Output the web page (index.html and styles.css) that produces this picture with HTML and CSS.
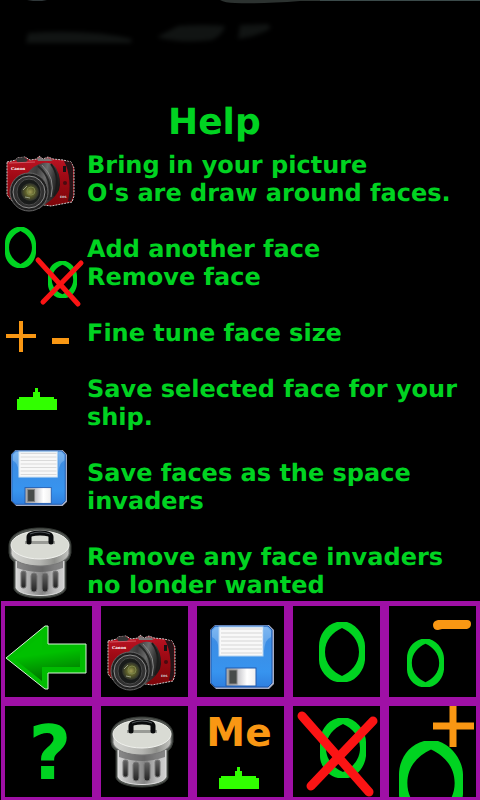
FILE: index.html
```html
<!DOCTYPE html>
<html lang="en">
<head>
    <meta charset="UTF-8">
    <meta name="viewport" content="width=device-width, initial-scale=1.0">
    <title>Help</title>
    <link rel="stylesheet" href="styles.css">
</head>
<body>

<!-- shared icons -->
<svg class="defs" aria-hidden="true">
    <defs>
        <linearGradient id="redBody" x1="0" y1="0" x2="0" y2="1">
            <stop offset="0" stop-color="#c01525"/>
            <stop offset="0.4" stop-color="#a00a15"/>
            <stop offset="1" stop-color="#7c0509"/>
        </linearGradient>
        <linearGradient id="barrel" x1="0" y1="0.3" x2="1" y2="0.6">
            <stop offset="0" stop-color="#555"/>
            <stop offset="0.3" stop-color="#3c3c3c"/>
            <stop offset="0.55" stop-color="#6c6c6c"/>
            <stop offset="0.75" stop-color="#3a3a3a"/>
            <stop offset="1" stop-color="#111"/>
        </linearGradient>
        <radialGradient id="glass">
            <stop offset="0" stop-color="#a09d55"/>
            <stop offset="0.5" stop-color="#5c5e2a"/>
            <stop offset="1" stop-color="#2b2e2a"/>
        </radialGradient>
        <linearGradient id="blue" x1="0" y1="0" x2="0" y2="1">
            <stop offset="0" stop-color="#65a9ee"/>
            <stop offset="0.25" stop-color="#3c8de4"/>
            <stop offset="0.75" stop-color="#3794ef"/>
            <stop offset="1" stop-color="#2f7fdf"/>
        </linearGradient>
        <linearGradient id="shutter">
            <stop offset="0" stop-color="#a5a5a5"/>
            <stop offset="0.4" stop-color="#c8c8cc"/>
            <stop offset="0.7" stop-color="#fff"/>
            <stop offset="1" stop-color="#eee"/>
        </linearGradient>
        <linearGradient id="can">
            <stop offset="0" stop-color="#d8d8d8"/>
            <stop offset="0.3" stop-color="#aaa"/>
            <stop offset="0.55" stop-color="#858585"/>
            <stop offset="0.8" stop-color="#bbb"/>
            <stop offset="1" stop-color="#d0d0d0"/>
        </linearGradient>
        <linearGradient id="rim">
            <stop offset="0" stop-color="#d5d6d2"/>
            <stop offset="0.5" stop-color="#b5b6b2"/>
            <stop offset="0.75" stop-color="#8f908c"/>
            <stop offset="1" stop-color="#c5c6c2"/>
        </linearGradient>
        <linearGradient id="slot" x1="0" y1="0" x2="0" y2="1">
            <stop offset="0" stop-color="#666"/>
            <stop offset="1" stop-color="#222"/>
        </linearGradient>
        <linearGradient id="arrow" x1="0.4" y1="0" x2="0.6" y2="1">
            <stop offset="0" stop-color="#00c000"/>
            <stop offset="0.4" stop-color="#00c000"/>
            <stop offset="0.7" stop-color="#009800"/>
            <stop offset="1" stop-color="#006c00"/>
        </linearGradient>
    </defs>

    <symbol id="camera" viewBox="0 0 70 58">
        <path d="M2 7 L11 5 L12 3 L20 2 L25 5 L32 4 L34 1 L38 4 L43 2 L48 4 L58 5 L66 7 L69 13 L69 41 L67 47 L46 51 L6 45 L2 40Z" fill="url(#redBody)" stroke="#ccc" stroke-width="1" stroke-dasharray="2 1"/>
        <path d="M59 6 L66 7 L68 13 L68 41 L66 46 L63 46 C66 35 65 16 59 6Z" fill="#251417"/>
        <path d="M11 5 L12 3 L19 2 L23 5 L20 8 L13 8Z" fill="#343434"/>
        <path d="M32 4 L35 2 L38 4 L43 3 L48 5 L46 6 L33 6Z" fill="#777"/>
        <path d="M4 8 L30 7" stroke="#d45563" stroke-width="1"/>
        <path d="M22 19 Q28 10 38 8 Q47 7 51 13 Q57 24 54 35 Q50 43 42 48 L34 54 L18 40Z" fill="url(#barrel)"/>
        <path d="M46 9 Q56 22 49 41" fill="none" stroke="#1b1b1b" stroke-width="2"/>
        <path d="M33 11 Q49 24 43 45" fill="none" stroke="#272727" stroke-width="2"/>
        <path d="M37 10 Q51 23 46 42" fill="none" stroke="#888" stroke-width="1"/>
        <ellipse cx="24" cy="37" rx="19" ry="19" fill="#202020" stroke="#666" stroke-width="1"/>
        <ellipse cx="24" cy="37" rx="16" ry="16" fill="#303030" stroke="#8c8c8c" stroke-width="1"/>
        <ellipse cx="24" cy="37" rx="12" ry="13" fill="#191b1a" stroke="#4a4a4a" stroke-width="1"/>
        <circle cx="25" cy="37" r="9" fill="url(#glass)"/>
        <circle cx="26" cy="36" r="4" fill="none" stroke="#7c854a" stroke-width="1"/>
        <path d="M18 35 L22 31 M20 42 L25 43" stroke="#989e85" stroke-width="1"/>
        <rect x="58" y="11" width="3" height="6" fill="#181014"/>
        <circle cx="60" cy="28" r="2" fill="#4a0b10"/>
        <text x="6" y="15" class="brand">Canon</text>
        <text x="55" y="43" class="model">EOS</text>
    </symbol>

    <symbol id="disk" viewBox="0 0 64 64">
        <path d="M5 0 H59 L64 5 V59 L59 64 H6 L0 58 V5Z" fill="#a5adc4"/>
        <path d="M5 1 H58 L62 5 V58 L58 62 H5 L1 58 V5Z" fill="url(#blue)" stroke="#1d57ac" stroke-width="1"/>
        <path d="M2 6 L6 2 H9 V26 Q8 14 2 12Z M61 6 L57 2 H54 V26 Q55 14 61 12Z" fill="#a7cff8" opacity="0.4"/>
        <rect x="9" y="2" width="44" height="29" fill="#f8f8f8" stroke="#b5d4f0" stroke-width="1"/>
        <path d="M11 4 H52 M11 8 H52 M11 12 H52 M11 16 H52 M11 20 H52 M11 24 H52 M11 28 H52" stroke="#d6d6d6" stroke-width="1"/>
        <rect x="16" y="43" width="30" height="18" fill="url(#shutter)" stroke="#205aae" stroke-width="1"/>
        <rect x="19" y="45" width="8" height="14" fill="#474b49" stroke="#888" stroke-width="1"/>
    </symbol>

    <symbol id="trash" viewBox="0 0 64 72">
        <path d="M1 19 C1 7 15 1 32 1 C49 1 63 7 63 19 V26 Q62 32 58 35 V62 C54 74 10 74 6 62 V35 Q1 31 1 26Z" fill="#505450" stroke="#333733" stroke-width="1"/>
        <path d="M8 34 H56 V61 C52 71 12 71 8 61Z" fill="url(#can)" stroke="#e0e0e0" stroke-width="1"/>
        <path d="M9 34 H55 V41 Q32 49 9 41Z" fill="#555" opacity="0.6"/>
        <path d="M3 19 H61 V27 C57 43 7 43 3 27Z" fill="url(#rim)" stroke="#777" stroke-width="1"/>
        <ellipse cx="32" cy="18" rx="29" ry="14" fill="#d9dbd4" stroke="#f0f1ed" stroke-width="1"/>
        <path d="M17 17 V14 H47 V17Z" fill="#999b96"/>
        <path d="M21 15 V10 Q21 6 32 6 Q43 6 43 10 V15" fill="none" stroke="#080a0b" stroke-width="5" stroke-linecap="round"/>
        <path d="M22 7 Q32 3 42 7" fill="none" stroke="#52575a" stroke-width="1"/>
        <g fill="url(#slot)" stroke="#777" stroke-width="1">
            <rect x="13" y="44" width="5" height="17" rx="2"/>
            <rect x="23" y="46" width="6" height="19" rx="3"/>
            <rect x="34" y="46" width="6" height="19" rx="3"/>
            <rect x="45" y="44" width="5" height="17" rx="2"/>
        </g>
    </symbol>

    <symbol id="ship" viewBox="0 0 40 22">
        <path d="M0 22 V11 H2 V9 H16 V4 H18 V0 H21 V4 H23 V9 H37 V11 H40 V22Z" fill="#31ff00"/>
    </symbol>

    <symbol id="ring" viewBox="0 0 46 60" preserveAspectRatio="none">
        <path d="M18 0 H28 C40 4 46 16 46 24 V38 C45 48 38 58 28 60 H18 C8 58 0 48 0 38 V24 C0 14 6 3 18 0Z M23 6 C14 10 6 18 6 30 C6 42 14 50 23 54 C32 50 40 42 40 30 C40 18 32 10 23 6Z" fill="#00d321" fill-rule="evenodd"/>
    </symbol>
</svg>

<header>
    <svg class="backdrop" viewBox="0 0 480 102" aria-hidden="true">
        <path d="M27 0 H47 L42 1 H33Z" fill="#30383a"/>
        <path d="M220 0 H320 V1 H300 Q260 4 235 3 Q225 3 220 0Z" fill="#2c3230"/>
        <path d="M320 0 H480 V1 H320Z" fill="#3b4a4a"/>
        <g class="smudge">
            <path d="M26 43 L28 33 Q90 29 132 39 L131 43Z"/>
            <path d="M157 37 L178 26 Q205 24 225 26 Q223 35 212 40 Q180 44 157 37Z"/>
            <path d="M238 39 L240 25 L268 24 L271 28 Q259 36 238 39Z"/>
        </g>
    </svg>
    <h1>Help</h1>
</header>

<main>
    <ul class="help-list">
        <li>
            <svg class="help-icon" viewBox="0 0 87 56" aria-hidden="true">
                <use href="#camera" x="5" y="4" width="70" height="58"/>
            </svg>
            <p>Bring in your picture<br>O's are draw around faces.</p>
        </li>
        <li>
            <svg class="help-icon" viewBox="0 0 87 56" aria-hidden="true">
                <use href="#ring" x="5" y="-8" width="31" height="41"/>
                <use href="#ring" x="48" y="26" width="29" height="37"/>
                <path class="cross" d="M38 25 L78 69 M81 28 L43 67" stroke-width="5"/>
            </svg>
            <p>Add another face<br>Remove face</p>
        </li>
        <li>
            <svg class="help-icon" viewBox="0 0 87 56" aria-hidden="true">
                <path class="sign" d="M6 17 H36 M21 2 V33" stroke-width="4"/>
                <path class="sign" d="M52 22 H69" stroke-width="6"/>
            </svg>
            <p>Fine tune face size</p>
        </li>
        <li>
            <svg class="help-icon" viewBox="0 0 87 56" aria-hidden="true">
                <use href="#ship" x="17" y="13" width="40" height="22"/>
            </svg>
            <p>Save selected face for your ship.</p>
        </li>
        <li>
            <svg class="help-icon" viewBox="0 0 87 56" aria-hidden="true">
                <use href="#disk" x="11" y="-9" width="56" height="56"/>
            </svg>
            <p>Save faces as the space invaders</p>
        </li>
        <li>
            <svg class="help-icon" viewBox="0 0 87 56" aria-hidden="true">
                <use href="#trash" x="8" y="-16" width="64" height="72"/>
            </svg>
            <p>Remove any face invaders no londer wanted</p>
        </li>
    </ul>
</main>

<nav class="toolbar">
    <button type="button" aria-label="Back">
        <svg viewBox="0 0 87 91">
            <path d="M1 52 L40 20 H43 V38 H81 V67 H43 V83 H40Z" fill="#00bd00" stroke="#d5f5d5" stroke-width="1"/>
            <path d="M8 52 L37 29 V44 H75 V61 H37 V75Z" fill="url(#arrow)"/>
        </svg>
    </button>
    <button type="button" aria-label="Picture">
        <svg viewBox="0 0 87 91"><use href="#camera" x="5" y="28" width="70" height="58"/></svg>
    </button>
    <button type="button" aria-label="Save">
        <svg viewBox="0 0 87 91"><use href="#disk" x="13" y="19" width="64" height="64"/></svg>
    </button>
    <button type="button" aria-label="Add face">
        <svg viewBox="0 0 87 91"><use href="#ring" x="26" y="16" width="46" height="60"/></svg>
    </button>
    <button type="button" aria-label="Smaller">
        <svg viewBox="0 0 87 91">
            <use href="#ring" x="18" y="33" width="37" height="48"/>
            <path d="M49 14 Q44 15 44 19 Q44 24 49 24 L53 23 H78 Q82 22 82 18 Q82 14 78 14Z" fill="#f99713"/>
        </svg>
    </button>
    <button type="button" class="question" aria-label="Help">?</button>
    <button type="button" aria-label="Delete">
        <svg viewBox="0 0 87 91"><use href="#trash" x="9" y="10" width="64" height="72"/></svg>
    </button>
    <button type="button" class="me">
        <span>Me</span>
        <svg class="me-ship" viewBox="0 0 40 22" aria-hidden="true"><use href="#ship" width="40" height="22"/></svg>
    </button>
    <button type="button" aria-label="Remove face">
        <svg viewBox="0 0 87 91">
            <use href="#ring" x="27" y="12" width="46" height="60"/>
            <path class="cross" d="M9 10 L76 86 M80 15 L18 80" stroke-width="9"/>
        </svg>
    </button>
    <button type="button" aria-label="Bigger">
        <svg viewBox="0 0 87 91">
            <path class="sign" d="M44 20 H85 M64 0 V41" stroke-width="7"/>
            <use href="#ring" x="10" y="35" width="64" height="84"/>
        </svg>
    </button>
</nav>

</body>
</html>
```

FILE: styles.css
```css
* {
    box-sizing: border-box;
}
body {
    font-family: "DejaVu Sans", sans-serif;
    font-weight: bold;
    text-rendering: geometricPrecision;
    margin: 0;
    min-height: 100vh;
    display: flex;
    flex-direction: column;
    background-color: #000;
    color: #00d321;
}
.defs {
    position: absolute;
    width: 0;
    height: 0;
    overflow: visible;
}
.backdrop {
    display: block;
    width: 100%;
}
.smudge {
    fill: #111413;
    filter: blur(2px);
}
h1 {
    margin: 0 0 7px;
    padding-left: 35%;
    font-size: 36px;
    line-height: 42px;
}
.help-list {
    display: flex;
    flex-direction: column;
    gap: 28px;
    margin: 0;
    padding: 0;
    list-style: none;
    font-size: 24px;
    line-height: 28px;
}
.help-list li {
    display: flex;
    align-items: flex-start;
}
.help-list p {
    flex: 1;
    margin: 0;
}
.help-icon {
    width: 87px;
    height: 56px;
    margin-bottom: -28px;
    overflow: visible;
}
.cross {
    fill: none;
    stroke: #fb1414;
    stroke-linecap: round;
}
.sign {
    stroke: #f99713;
}
.brand {
    fill: #fff;
    font-family: "DejaVu Serif", serif;
    font-size: 4px;
}
.model {
    fill: #ccc;
    font-size: 3px;
}
.toolbar {
    display: grid;
    grid-template-columns: repeat(5, 1fr);
    gap: 9px;
    margin: auto 0 0 1px;
    padding: 5px 4px 3px;
    background-color: #9f10a6;
}
.toolbar button {
    min-width: 0;
    padding: 0;
    border: none;
    background-color: #000;
    color: #00d321;
    font-family: inherit;
    font-weight: bold;
    cursor: pointer;
}
.toolbar svg {
    display: block;
    width: 100%;
}
.toolbar .question {
    font-size: 74px;
    line-height: 95px;
    height: 91px;
    padding-left: 3px;
}
.toolbar .me {
    display: flex;
    flex-direction: column;
    align-items: center;
    justify-content: space-between;
    padding: 4px 3px 8px 0;
    color: #f99713;
    font-size: 39px;
    line-height: 46px;
}
.toolbar .me-ship {
    width: 40px;
}
```
